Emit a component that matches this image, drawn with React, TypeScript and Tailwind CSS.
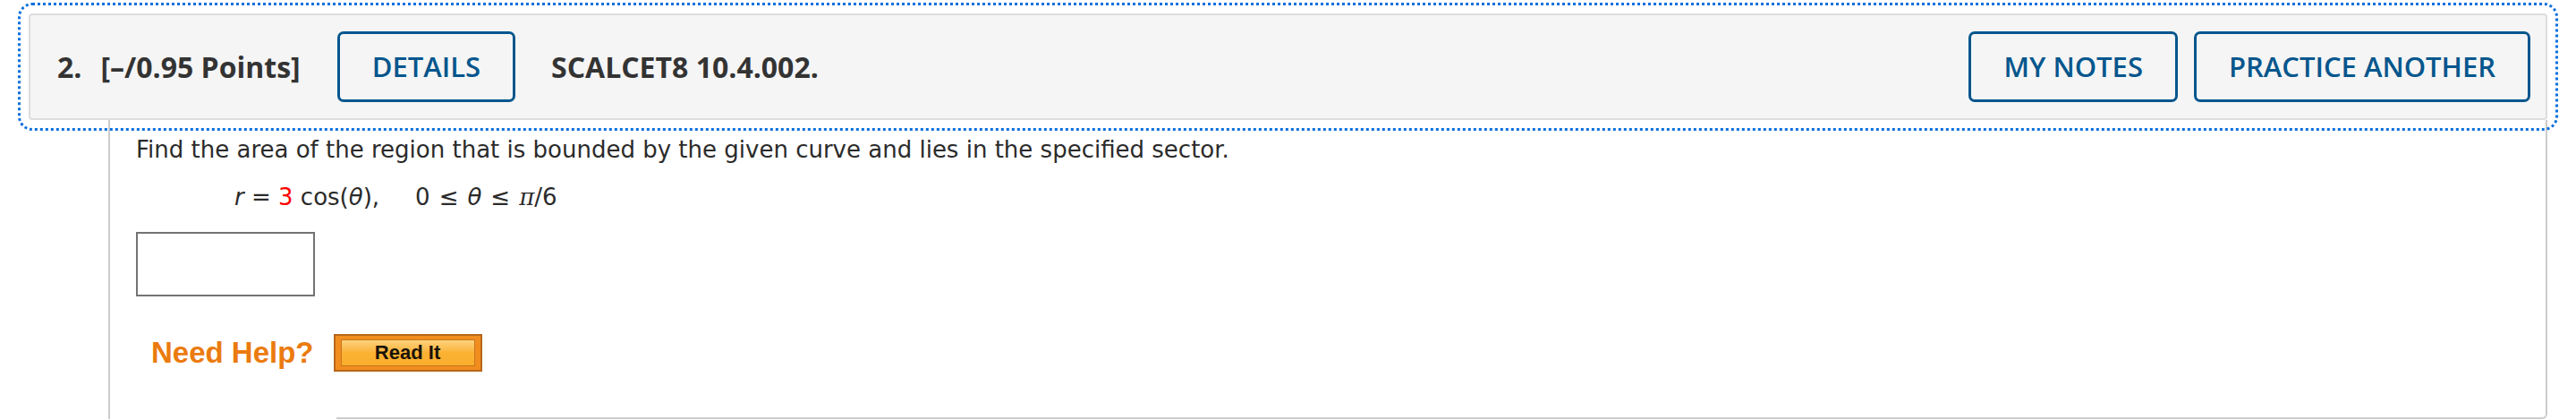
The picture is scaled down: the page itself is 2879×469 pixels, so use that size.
import React from "react";

const headerFont = { fontFamily: '"Open Sans", "Liberation Sans", sans-serif' };

function OutlineButton({ label }: { label: string }) {
  return (
    <button className="h-[79px] rounded-[7px] border-[3px] border-[#05568d] px-[36px] text-[31px] font-semibold uppercase text-[#05568d]">
      {label}
    </button>
  );
}

function ReadItButton() {
  return (
    <button className="h-[42px] w-[166px] border-2 border-[#b9661c] bg-[#f08d1e] px-[6px] py-[4px]">
      <span className="flex h-full w-full items-center justify-center border border-[#c8761e] bg-gradient-to-b from-[#fdd27a] via-[#fbb233] to-[#f9ad2c] font-['Liberation_Sans',Arial,sans-serif] text-[22px] font-bold leading-none text-[#1a1208]">
        Read It
      </span>
    </button>
  );
}

export default function App() {
  return (
    <div className="h-[469px] w-full overflow-hidden bg-white pt-[15px]">
      {/* question header */}
      <div
        className="mx-[32px] flex h-[119px] items-center rounded-[4px] border-2 border-[#dddddd] bg-[#f5f5f5] pl-[30px] pr-[17px] text-[#333333] outline-3 outline-offset-[9px] outline-[#0b6fdc] outline-dotted"
        style={headerFont}
      >
        <span className="text-[32px] font-bold">2.</span>
        <span className="ml-[21px] text-[32px] font-bold">[–/0.95 Points]</span>
        <div className="ml-[41px]">
          <OutlineButton label="Details" />
        </div>
        <span className="ml-[40px] text-[32px] font-bold">SCALCET8 10.4.002.</span>
        <div className="ml-auto flex gap-[18px]">
          <OutlineButton label="My Notes" />
          <OutlineButton label="Practice Another" />
        </div>
      </div>

      {/* question body */}
      <div className="ml-[121px] mr-[32px] border-l-2 border-[#cccccc]">
        <div className="border-r-2 border-[#cccccc] pl-[29px] pt-[15px] font-['DejaVu_Sans',Verdana,sans-serif] text-[26px] leading-[36px] text-[#2b2b2b]">
          <p>Find the area of the region that is bounded by the given curve and lies in the specified sector.</p>
          <p className="mt-[17px] pl-[110px]">
            <i>r</i> = <span className="text-[#ff0000]">3</span> cos(<i>θ</i>),
            <span className="ml-[40px]">
              0<span className="mx-[10px]">≤</span>
              <i>θ</i>
              <span className="mx-[10px]">≤</span>
              <i className="font-['DejaVu_Serif',serif]">π</i>/6
            </span>
          </p>
          <input
            type="text"
            className="mt-[21px] block h-[72px] w-[200px] border-2 border-[#737373] bg-white"
          />
          <div className="mt-[42px] flex items-center gap-[22px] pl-[17px]">
            <span className="font-['Liberation_Sans',Arial,sans-serif] text-[33px] font-bold text-[#eb7b0e]">
              Need Help?
            </span>
            <ReadItButton />
          </div>
        </div>
        <div className="flex">
          <div className="w-[255px] shrink-0" />
          <div className="-ml-[2px] h-[53px] flex-1 rounded-br-[6px] border-b-2 border-r-2 border-[#cccccc]" />
        </div>
      </div>
    </div>
  );
}
